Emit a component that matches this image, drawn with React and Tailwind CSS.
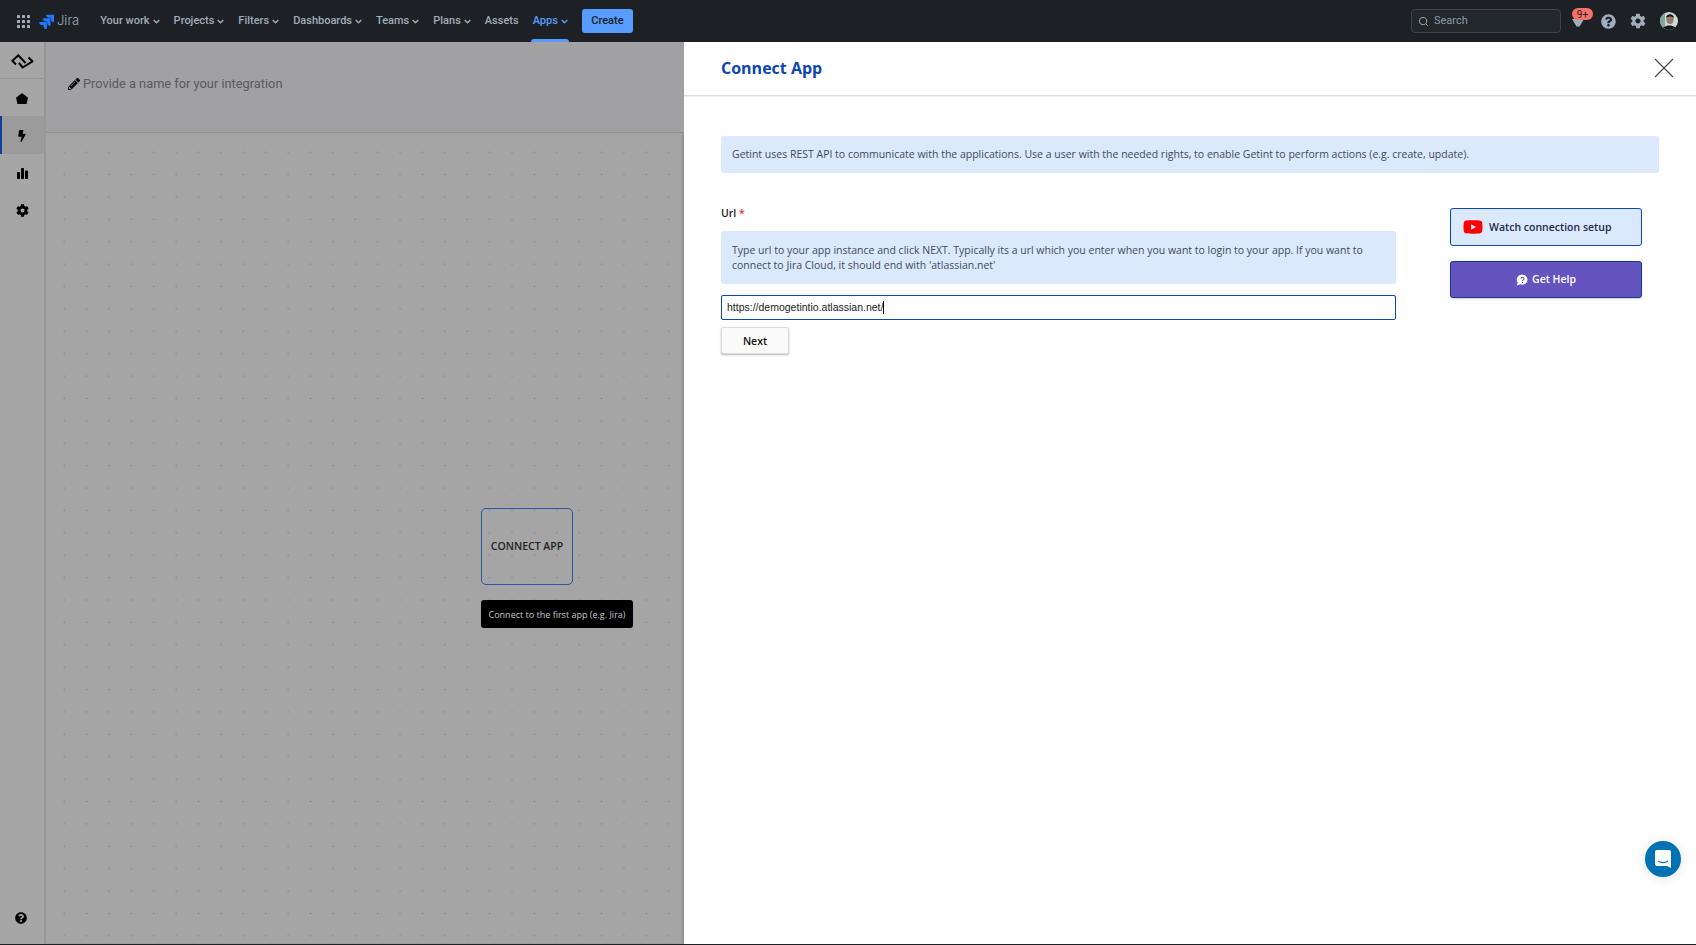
import React from 'react';
import { FaBolt, FaCog, FaQuestionCircle, FaPencilAlt, FaYoutube } from 'react-icons/fa';
import { IoMdSettings } from 'react-icons/io';
import { FiSearch } from 'react-icons/fi';

const navItems = ['Your work', 'Projects', 'Filters', 'Dashboards', 'Teams', 'Plans', 'Assets', 'Apps'];

function Chevron() {
  return (
    <svg width="7" height="5" viewBox="0 0 7 5" fill="none" stroke="currentColor" strokeWidth="1.4">
      <path d="M0.7 0.9L3.5 3.7L6.300 0.9" />
    </svg>
  );
}

function JiraMark() {
  return (
    <svg width="15" height="15" viewBox="0 0 24 24" fill="#1d7afc">
      <path d="M23 1H11.5c0 2.900 2.300 5.100 5.100 5.100h2.100v2c0 2.900 2.400 5.200 5.300 5.200V2c0-.6-.4-1-1-1z" />
      <path d="M17.300 6.800H5.800c0 2.900 2.300 5.100 5.100 5.100H13v2.100c0 2.800 2.400 5.100 5.300 5.100V7.800c0-.6-.4-1-1-1z" />
      <path d="M11.500 12.600H0c0 2.900 2.400 5.100 5.300 5.100h2.100v2.100c0 2.800 2.300 5.200 5.200 5.200V13.600c0-.6-.5-1-1.100-1z" />
    </svg>
  );
}

function AppGrid() {
  return (
    <svg width="13" height="13" viewBox="0 0 13 13" fill="#9fadbc">
      {[0, 5, 10].map((y) =>
        [0, 5, 10].map((x) => <rect key={`${x}-${y}`} x={x} y={y} width="3" height="3" rx="0.6" />)
      )}
    </svg>
  );
}

function GetintLogo() {
  return (
    <svg width="23" height="15" viewBox="0 0 23 15" fill="none" stroke="#000" strokeWidth="2">
      <path d="M5 10.500L1.300 6.800L7.300 1.300L14.500 9" />
      <path d="M17.500 3.500L21.500 7.300L11.700 13.500L8 9" strokeLinejoin="round" />
    </svg>
  );
}

function Avatar() {
  return (
    <svg width="18" height="18" viewBox="0 0 18 18" className="rounded-full">
      <rect width="18" height="18" fill="#cfdcd6" />
      <rect x="0" width="5" height="18" fill="#7fa79b" />
      <ellipse cx="10" cy="7.500" rx="3.600" ry="4.500" fill="#9a7a68" />
      <path d="M6 6 C6 1 14 1 14 6 C12 4 8 4 6 6z" fill="#1c1512" />
      <path d="M2 18 C3 12 16 12 17 18z" fill="#15171a" />
    </svg>
  );
}

function App() {
  return (
    <div className="flex h-[945px] w-[1696px] flex-col overflow-hidden bg-[#1d2125] font-['Roboto',sans-serif]">
      <header className="flex h-[42px] shrink-0 items-center bg-[#1d2125] pl-[17px] pr-[18px] text-[11px] font-medium text-[#9fadbc]">
        <AppGrid />
        <div className="ml-[9px] flex items-center">
          <JiraMark />
          <span className="ml-[3px] font-['Inter',sans-serif] text-[13px] font-light text-[#9fadbc]">Jira</span>
        </div>
        <nav className="ml-[21px] flex h-full items-center gap-[14px]">
          {navItems.map((item) => (
            <div key={item} className={item === 'Apps' ? 'relative flex h-full items-center gap-[3px] pt-px text-[#579dff]' : 'flex h-full items-center gap-[3px] pt-px'}>
              {item}
              {item !== 'Assets' && <Chevron />}
              {item === 'Apps' && <span className="absolute -left-[2px] -right-[1px] bottom-0 h-[3px] rounded-t-sm bg-[#579dff]" />}
            </div>
          ))}
          <button className="h-[24px] w-[51px] rounded-[3px] bg-[#579dff] pt-px text-[11px] font-medium text-[#1d2125]">Create</button>
        </nav>
        <div className="ml-auto flex items-center">
          <div className="flex h-[24px] w-[150px] items-center gap-[5px] rounded-[4px] border border-[#3b444c] bg-[#22272b] pl-[6px]">
            <FiSearch className="text-[11px] text-[#9fadbc]" />
            <span className="pt-px text-[11px] font-normal text-[#8c9bab]">Search</span>
          </div>
          <div className="relative ml-[5px] flex h-[24px] w-[24px] items-center justify-center">
            <svg width="14" height="14" viewBox="0 0 14 14" fill="#9fadbc">
              <path d="M1 5h12L8.500 12.500h-3z" />
            </svg>
            <span className="absolute -top-[1px] left-[6px] flex h-[12px] w-[21px] items-center justify-center rounded-full bg-[#f87168] text-[10px] font-normal text-[#1d2125]">9+</span>
          </div>
          <FaQuestionCircle className="ml-[11px] text-[15px] text-[#9fadbc]" />
          <IoMdSettings className="ml-[13px] text-[18px] text-[#9fadbc]" />
          <div className="ml-[13px] flex h-[18px] w-[18px]">
            <Avatar />
          </div>
        </div>
      </header>

      <main className="flex h-[902px] shrink-0">
        <div className="flex w-[684px] shrink-0 bg-[#a5a5a6] shadow-[inset_-2px_0_2px_rgba(0,0,0,0.12)]">
          <aside className="flex w-[46px] shrink-0 flex-col items-center border-r-2 border-[#979798] bg-[#a6a6a6]">
            <div className="flex h-[37px] w-full shrink-0 items-center justify-center border-b border-[#949495] pt-[3px]">
              <GetintLogo />
            </div>
            <div className="flex h-[37px] w-full items-center justify-center pt-px">
              <svg width="12" height="11" viewBox="0 0 12 11" fill="#000">
                <path d="M6 0L12 4.800L10.500 11H1.500L0 4.800z" />
              </svg>
            </div>
            <div className="flex h-[38px] w-full items-center justify-center border-l-2 border-[#0f3f94] bg-[#9b9b9b] pt-[1px]">
              <FaBolt className="mr-[2px] text-[12px] text-black" />
            </div>
            <div className="flex h-[37px] w-full items-center justify-center pt-px">
              <svg width="11" height="11" viewBox="0 0 11 11" fill="#000">
                <rect x="0" y="4" width="3" height="7" rx="0.8" />
                <rect x="4" y="0" width="3" height="11" rx="0.8" />
                <rect x="8" y="2.500" width="3" height="8.500" rx="0.8" />
              </svg>
            </div>
            <div className="flex h-[38px] w-full items-center justify-center pt-px">
              <FaCog className="text-[13px] text-black" />
            </div>
            <div className="mb-[20px] mr-[2px] mt-auto flex">
              <FaQuestionCircle className="text-[12px] text-black" />
            </div>
          </aside>
          <div className="flex flex-1 flex-col">
            <div className="flex h-[91px] shrink-0 items-center gap-[3px] border-b border-[#8f8f90] bg-[#a1a1a3] pb-[6px] pl-[22px] text-[12.800px] text-[#5a5a5b]">
              <FaPencilAlt className="text-[12px] text-black" />
              Provide a name for your integration
            </div>
            <div className="relative flex-1 bg-[radial-gradient(circle,#7b7b7c_0.6px,transparent_1px)] bg-[length:22.4px_22.4px] bg-[position:7px_8px] font-['Open_Sans',sans-serif]">
              <div className="absolute left-[435px] top-[375px] flex h-[77px] w-[92px] items-center justify-center rounded-[5px] border border-[#2a56a0] text-[10.5px] font-semibold text-[#232323]">
                CONNECT APP
              </div>
              <div className="absolute left-[435px] top-[467px] flex h-[28px] w-[152px] items-center justify-center whitespace-nowrap rounded-[3px] bg-black pt-px text-[9px] text-[#c8c8c8]">
                Connect to the first app (e.g. Jira)
              </div>
            </div>
          </div>
        </div>

        <section className="relative flex flex-1 flex-col bg-white font-['Open_Sans',sans-serif]">
          <div className="flex h-[54px] shrink-0 items-center justify-between border-b border-[#dcdcdc] pb-[2px] pl-[37px] pr-[22px] shadow-[0_1px_1px_rgba(0,0,0,0.05)]">
            <h1 className="text-[16px] font-bold text-[#0b46b2]">Connect App</h1>
            <svg width="20" height="20" viewBox="0 0 20 20" stroke="#4a4a4a" strokeWidth="1.200">
              <path d="M1 1l18 18M19 1L1 19" />
            </svg>
          </div>

          <div className="px-[37px] pt-[40px]">
            <div className="flex h-[37px] w-[938px] items-center rounded-[3px] bg-[#dbe9fd] pl-[11px] text-[10.500px] text-[#3f4a5a]">
              Getint uses REST API to communicate with the applications. Use a user with the needed rights, to enable Getint to perform actions (e.g. create, update).
            </div>

            <div className="mt-[32px] flex">
              <div className="w-[675px] shrink-0">
                <div className="text-[10.500px] font-semibold leading-[16px] text-[#1a1a1a]">
                  Url <span className="text-[#d33]">*</span>
                </div>
                <div className="mt-[10px] flex h-[53px] items-center rounded-[3px] bg-[#dbe9fd] px-[11px] text-[10.500px] leading-[15px] text-[#3f4a5a]">
                  <p>Type url to your app instance and click NEXT. Typically its a url which you enter when you want to login to your app. If you want to connect to Jira Cloud, it should end with 'atlassian.net'</p>
                </div>
                <div className="mt-[11px] flex h-[25px] items-center rounded-[2px] border-[1.500px] border-[#0b46b2] pl-[5px] font-['Liberation_Sans',sans-serif] text-[10.500px] text-[#222]">
                  https://demogetintio.atlassian.net/
                  <span className="h-[13px] w-px bg-black" />
                </div>
                <button className="mt-[7px] h-[27px] w-[68px] rounded-[2px] border border-[#ddd] bg-[#fafafa] pt-[2px] text-[10.500px] font-semibold text-[#111] shadow-[0_1px_2px_rgba(0,0,0,0.3)]">
                  Next
                </button>
              </div>

              <div className="ml-[54px] mt-[3px] flex w-[192px] flex-col gap-[15px]">
                <div className="flex h-[38px] items-center rounded-[3px] border border-[#0b46b2] bg-[#dbe9fd] pl-[12px] text-[10.500px] font-semibold text-[#1f2a4d]">
                  <FaYoutube className="text-[20px] text-[#ff0000]" />
                  <span className="ml-[6px] pt-[2px]">Watch connection setup</span>
                </div>
                <div className="flex h-[37px] items-center justify-center gap-[4px] rounded-[3px] border border-[#123a8f] bg-[#6554c0] text-[10.500px] font-semibold text-white shadow-[0_1px_2px_rgba(0,0,0,0.2)]">
                  <svg width="12" height="12" viewBox="0 0 12 12">
                    <path d="M6.500 0.800a5 5 0 0 1 0 10c-.8 0-1.500-.2-2.200-.5L.6 11.400c.5-.8 1-1.700 1.200-2.600A5 5 0 0 1 6.500.8z" fill="#fff" />
                    <path d="M5 4.700c0-2 3-2 3 0 0 1.200-1.500 1.200-1.500 2.300M6.500 8v1" fill="none" stroke="#6554c0" strokeWidth="1.100" />
                  </svg>
                  Get Help
                </div>
              </div>
            </div>
          </div>

          <div className="absolute bottom-[67px] right-[15px] flex h-[36px] w-[36px] items-center justify-center rounded-full bg-[#0071b2] shadow-[0_1px_12px_rgba(0,0,0,0.12)]">
            <svg width="16" height="18" viewBox="0 0 16 18">
              <path d="M2 0h12a2 2 0 0 1 2 2v16l-4-2H2a2 2 0 0 1-2-2V2a2 2 0 0 1 2-2z" fill="#fff" />
              <path d="M3 11c3 2 7 2 10 0" fill="none" stroke="#0071b2" strokeWidth="1.200" />
            </svg>
          </div>
        </section>
      </main>
      <div className="h-px shrink-0 bg-[#1d2125]" />
    </div>
  );
}

export default App;
